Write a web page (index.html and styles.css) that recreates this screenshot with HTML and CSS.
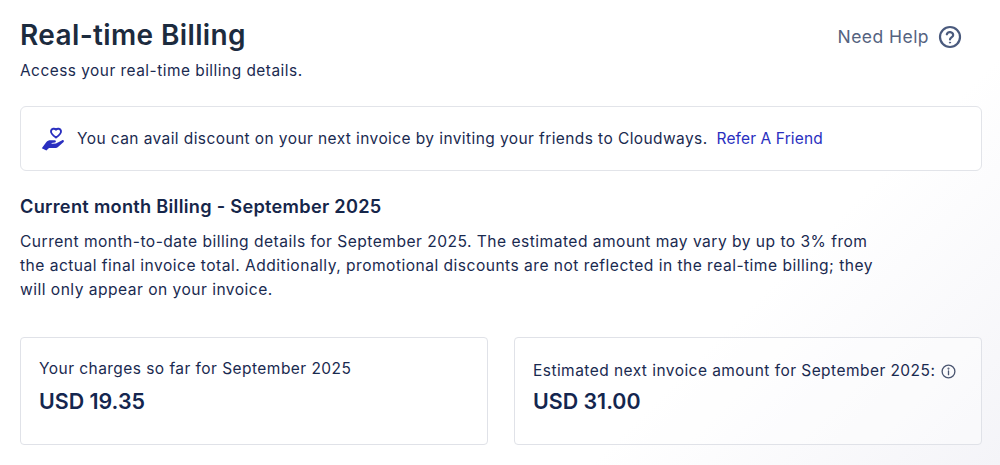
FILE: index.html
```html
<!DOCTYPE html>
<html lang="en">
<head>
<meta charset="utf-8">
<title>Real-time Billing</title>
<link rel="stylesheet" href="styles.css">
</head>
<body>
<main class="page">
  <header class="top">
    <div>
      <h1 class="title">Real-time Billing</h1>
      <p class="subtitle">Access your real-time billing details.</p>
    </div>
    <a class="help">
      <span>Need Help</span>
      <svg class="help-icon" viewBox="0 0 24 24" fill="none" stroke="#4a5a7d" stroke-width="2.2" stroke-linecap="round">
        <circle cx="12" cy="12" r="10"/>
        <path d="M8.8 9.3a3.3 3.3 0 0 1 6.4 .7c0 2.2-3.2 2.6-3.2 4.4"/>
        <circle cx="12" cy="17.6" r=".6" fill="#4a5a7d" stroke-width="1"/>
      </svg>
    </a>
  </header>

  <section class="notice">
    <svg class="gift" viewBox="0 0 24 24">
      <path d="M15 2.6c1.3-1.5 4.6-1.2 5 1.4.4 2.6-2.5 4.8-5 6.6-2.5-1.8-5.4-4-5-6.6.4-2.6 3.7-2.9 5-1.4z" fill="none" stroke="#2a2fc0" stroke-width="1.9"/>
      <path d="M.8 21.2l4.4-6c1.2-1.4 2.6-2 4.2-2h4.4c1.2 0 1.6 1.7.2 2.2l-3.4.7 0 .6 4.4-.1 6.2-3.4c1.3-.6 2.4.9 1.4 1.9l-5.6 5c-.7.6-1.4.8-2.2.8H8l-2.6 2.6z" fill="#2a2fc0"/>
    </svg>
    <span class="notice-text">You can avail discount on your next invoice by inviting your friends to Cloudways.</span>
    <a class="refer">Refer A Friend</a>
  </section>

  <h2 class="month">Current month Billing - September 2025</h2>
  <p class="desc">Current month-to-date billing details for September 2025. The estimated amount may vary by up to 3% from<br>the actual final invoice total. Additionally, promotional discounts are not reflected in the real-time billing; they<br>will only appear on your invoice.</p>

  <section class="cards">
    <article class="card">
      <div class="card-label">Your charges so far for September 2025</div>
      <div class="card-amount">USD 19.35</div>
    </article>
    <article class="card card-alt">
      <div class="card-label">
        <span>Estimated next invoice amount for September 2025:</span>
        <svg class="info" viewBox="0 0 16 16" fill="none" stroke="#4a5570" stroke-width="1.4" stroke-linecap="round">
          <circle cx="8" cy="8" r="6.8"/>
          <path d="M8 7.4v4"/>
          <circle cx="8" cy="4.9" r=".4" fill="#4a5570"/>
        </svg>
      </div>
      <div class="card-amount">USD 31.00</div>
    </article>
  </section>
</main>
</body>
</html>
```
FILE: styles.css
```css
* { box-sizing: border-box; }
html, body { height: 100%; }
body {
  margin: 0;
  height: 465px;
  overflow: hidden;
  font-family: "Inter", "Liberation Sans", sans-serif;
  color: #1b2a4a;
  background: linear-gradient(135deg, #ffffff 0%, #ffffff 72%, #f4f4f8 100%);
}
.page { padding: 0 18px 0 20px; }
.top { display: flex; justify-content: space-between; align-items: flex-start; padding-top: 18px; }
.title { margin: 0; font-size: 28px; line-height: 34px; font-weight: 600; letter-spacing: .37px; color: #1c2b3e; }
.subtitle { margin: 8px 0 0; font-size: 15.4px; line-height: 22px; letter-spacing: .5px; color: #1a2a50; }
.help { display: flex; align-items: center; gap: 9px; margin: 7px 20px 0 0; font-size: 17.5px; line-height: 24px; letter-spacing: .45px; color: #55637f; }
.help-icon { width: 24px; height: 24px; }
.notice {
  display: flex; align-items: center;
  height: 65px; margin-top: 24px; padding-left: 20px;
  border: 1px solid #e2e4e9; border-radius: 6px; background: #fff;
  font-size: 15.5px; letter-spacing: .41px;
}
.gift { width: 24px; height: 24px; margin-right: 12px; }
.notice-text { color: #1a2a50; }
.refer { margin-left: 9px; letter-spacing: .12px; color: #2a2fc0; }
.month { margin: 24px 0 0; font-size: 18.2px; line-height: 22px; font-weight: 600; letter-spacing: .28px; color: #16264a; }
.desc { margin: 13px 0 0; font-size: 15.6px; line-height: 24px; letter-spacing: .47px; color: #1a2a50; }
.cards { display: grid; grid-template-columns: 468px 468px; gap: 26px; margin-top: 35px; }
.card {
  height: 108px; padding: 21px 18px 0;
  border: 1px solid #e0e2e8; border-radius: 4px;
}
.card-alt { padding-top: 23px; background: rgba(255,255,255,.4); }
.card-alt .card-amount { margin-top: 7px; }
.card-label { display: flex; align-items: center; gap: 6px; font-size: 15.5px; line-height: 20px; letter-spacing: .45px; color: #1a2a50; }
.info { width: 15px; height: 15px; }
.card-amount { margin-top: 9px; font-size: 21.4px; line-height: 27px; font-weight: 600; color: #14264f; }
```
